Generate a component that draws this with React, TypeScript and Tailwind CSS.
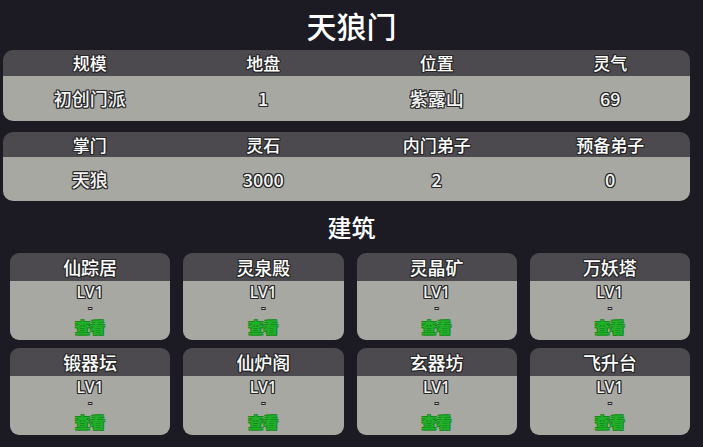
const STATS = [
  [
    ["规模", "初创门派"],
    ["地盘", "1"],
    ["位置", "紫露山"],
    ["灵气", "69"],
  ],
  [
    ["掌门", "天狼"],
    ["灵石", "3000"],
    ["内门弟子", "2"],
    ["预备弟子", "0"],
  ],
];

const BUILDINGS = ["仙踪居", "灵泉殿", "灵晶矿", "万妖塔", "锻器坛", "仙炉阁", "玄器坊", "飞升台"];

const outline =
  "[text-shadow:-1px_-1px_0_#262626,1px_-1px_0_#262626,-1px_1px_0_#262626,1px_1px_0_#262626,0_1px_0_#262626,0_-1px_0_#262626,1px_0_0_#262626,-1px_0_0_#262626]";

function StatTable({ rows, headH, bodyH }: { rows: string[][]; headH: string; bodyH: string }) {
  return (
    <div className="ml-[3px] mr-[13px] rounded-[10px] overflow-hidden">
      <div className={`bg-[#4c4a4f] ${headH}`}>
        <div className="grid grid-cols-4 w-[694px] h-full">
          {rows.map(([label]) => (
            <div key={label} className={`flex items-center justify-center text-[17px] font-medium text-white ${outline}`}>
              {label}
            </div>
          ))}
        </div>
      </div>
      <div className={`bg-[#a8a8a3] ${bodyH}`}>
        <div className="grid grid-cols-4 w-[694px] h-full">
          {rows.map(([label, value]) => (
            <div key={label} className={`flex items-center justify-center text-[18px] font-medium text-[#f4f4f4] ${outline}`}>
              {value}
            </div>
          ))}
        </div>
      </div>
    </div>
  );
}

function BuildingCard({ name }: { name: string }) {
  return (
    <div className="rounded-[9px] overflow-hidden">
      <div className={`h-[28px] bg-[#4c4a4f] flex items-center justify-center text-[18px] font-medium text-white ${outline}`}>
        {name}
      </div>
      <div className="h-[59px] bg-[#a8a8a3] flex flex-col items-center">
        <div
          className={`mt-[2px] h-[18px] leading-[18px] text-[16px] font-['Noto_Sans',sans-serif] font-medium text-[#f4f4f4] ${outline}`}
        >
          LV1
        </div>
        <div className={`h-[14px] leading-[14px] text-[10px] font-['Liberation_Sans',sans-serif] text-[#d8d8d8] ${outline}`}>
          -
        </div>
        <div className="mt-[4px] h-[16px] leading-[16px] text-[15px] font-bold text-[#23b02b] [text-shadow:-1px_-1px_0_#148c1b,1px_-1px_0_#148c1b,-1px_1px_0_#148c1b,1px_1px_0_#148c1b]">
          查看
        </div>
      </div>
    </div>
  );
}

export default function App() {
  return (
    <div className="w-full h-[447px] overflow-hidden bg-[#1c1a22] font-['Noto_Sans_CJK_SC','Noto_Sans',sans-serif]">
      <div className="h-[50px] flex items-center justify-center text-[30px] font-medium text-white">天狼门</div>

      <StatTable rows={STATS[0]} headH="h-[26px]" bodyH="h-[45px]" />
      <div className="h-[11px]" />
      <StatTable rows={STATS[1]} headH="h-[25px]" bodyH="h-[44px]" />

      <div className="h-[52px] flex items-center justify-center text-[24px] font-medium text-white">建筑</div>

      <div className="ml-[10px] mr-[13px] grid grid-cols-4 gap-x-[13px] gap-y-[8px]">
        {BUILDINGS.map((b) => (
          <BuildingCard key={b} name={b} />
        ))}
      </div>
    </div>
  );
}
